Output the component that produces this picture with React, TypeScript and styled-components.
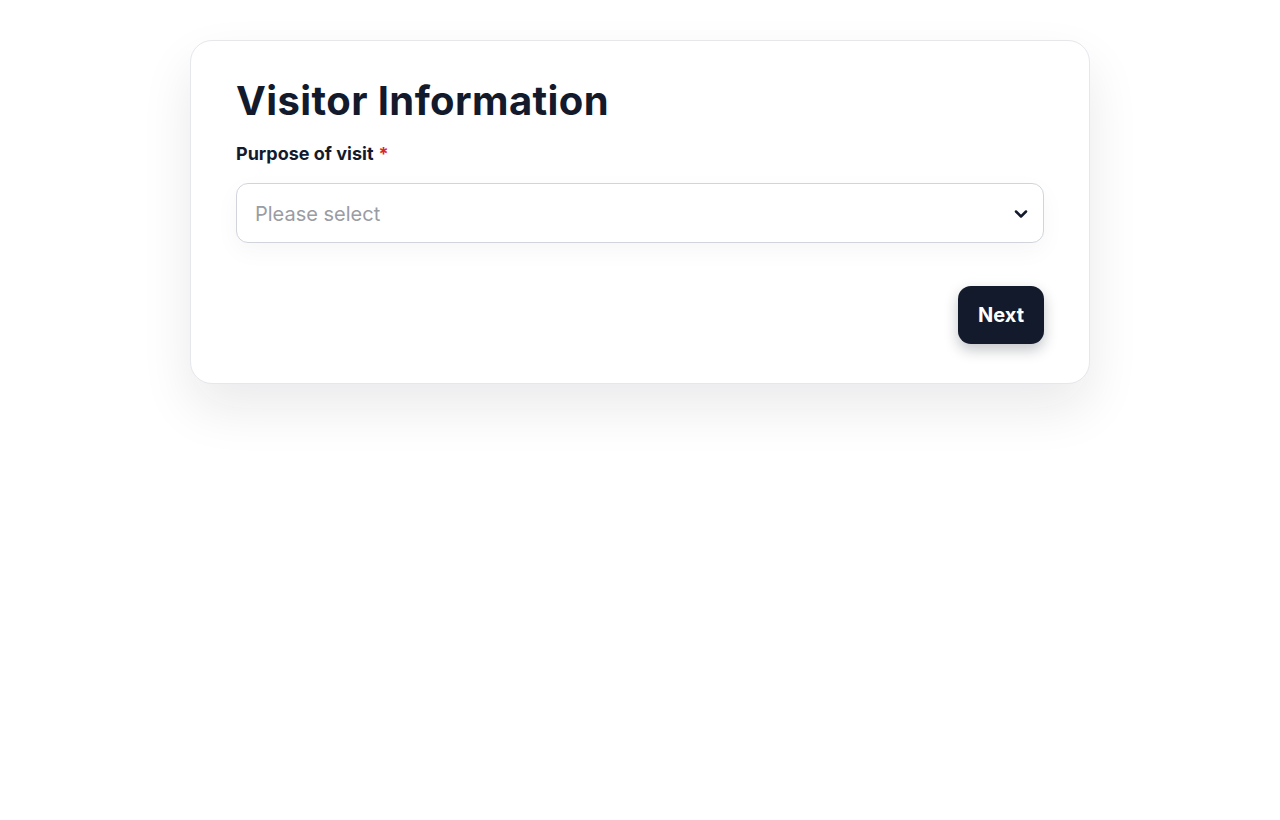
import styled, { createGlobalStyle } from "styled-components";

const GlobalStyle = createGlobalStyle`
  body {
    margin: 0;
    background: #ffffff;
    font-family: Inter, "Noto Sans", sans-serif;
    color: #131a2b;
  }
`;

const Page = styled.main`
  display: flex;
  justify-content: center;
  align-items: flex-start;
  min-height: 100vh;
  box-sizing: border-box;
  padding-top: 40px;
`;

const Card = styled.section`
  width: 900px;
  box-sizing: border-box;
  padding: 34px 45px 39px;
  border: 1px solid #e5e7eb;
  border-radius: 22px;
  background: #ffffff;
  box-shadow: 0 24px 52px rgba(17, 24, 39, 0.09);
`;

const Title = styled.h1`
  margin: 0;
  font-size: 40px;
  line-height: 52px;
  font-weight: 700;
  letter-spacing: 0.4px;
  color: #131a2b;
`;

const Field = styled.div`
  display: flex;
  flex-direction: column;
  gap: 18px;
  margin-top: 16px;
`;

const Label = styled.label`
  font-size: 18px;
  line-height: 22px;
  font-weight: 700;
  color: #131a2b;
`;

const Required = styled.span`
  color: #dc2626;
  margin-left: 5px;
`;

const SelectBox = styled.button`
  display: flex;
  align-items: center;
  justify-content: space-between;
  height: 60px;
  padding: 2px 12px 0 18px;
  border: 1px solid #d1d5db;
  border-radius: 12px;
  background: #ffffff;
  box-shadow: 0 8px 24px rgba(17, 24, 39, 0.04);
  font-family: inherit;
  cursor: pointer;
`;

const Placeholder = styled.span`
  font-size: 20px;
  color: #9a9ca3;
`;

const Actions = styled.div`
  display: flex;
  justify-content: flex-end;
  margin-top: 43px;
`;

const NextButton = styled.button`
  height: 58px;
  padding: 0 20px;
  border: 0;
  border-radius: 13px;
  background: #131a2b;
  color: #ffffff;
  font-family: inherit;
  font-size: 20px;
  font-weight: 700;
  box-shadow: 0 6px 14px rgba(17, 24, 39, 0.25);
  cursor: pointer;
`;

function Chevron() {
  return (
    <svg width="20" height="20" viewBox="0 0 24 24" fill="none" stroke="#131a2b" strokeWidth="3" strokeLinecap="round" strokeLinejoin="round">
      <path d="M6 9l6 6 6-6" />
    </svg>
  );
}

export default function App() {
  return (
    <>
      <GlobalStyle />
      <Page>
        <Card>
          <Title>Visitor Information</Title>
          <Field>
            <Label>
              Purpose of visit<Required>*</Required>
            </Label>
            <SelectBox type="button">
              <Placeholder>Please select</Placeholder>
              <Chevron />
            </SelectBox>
          </Field>
          <Actions>
            <NextButton type="button">Next</NextButton>
          </Actions>
        </Card>
      </Page>
    </>
  );
}
